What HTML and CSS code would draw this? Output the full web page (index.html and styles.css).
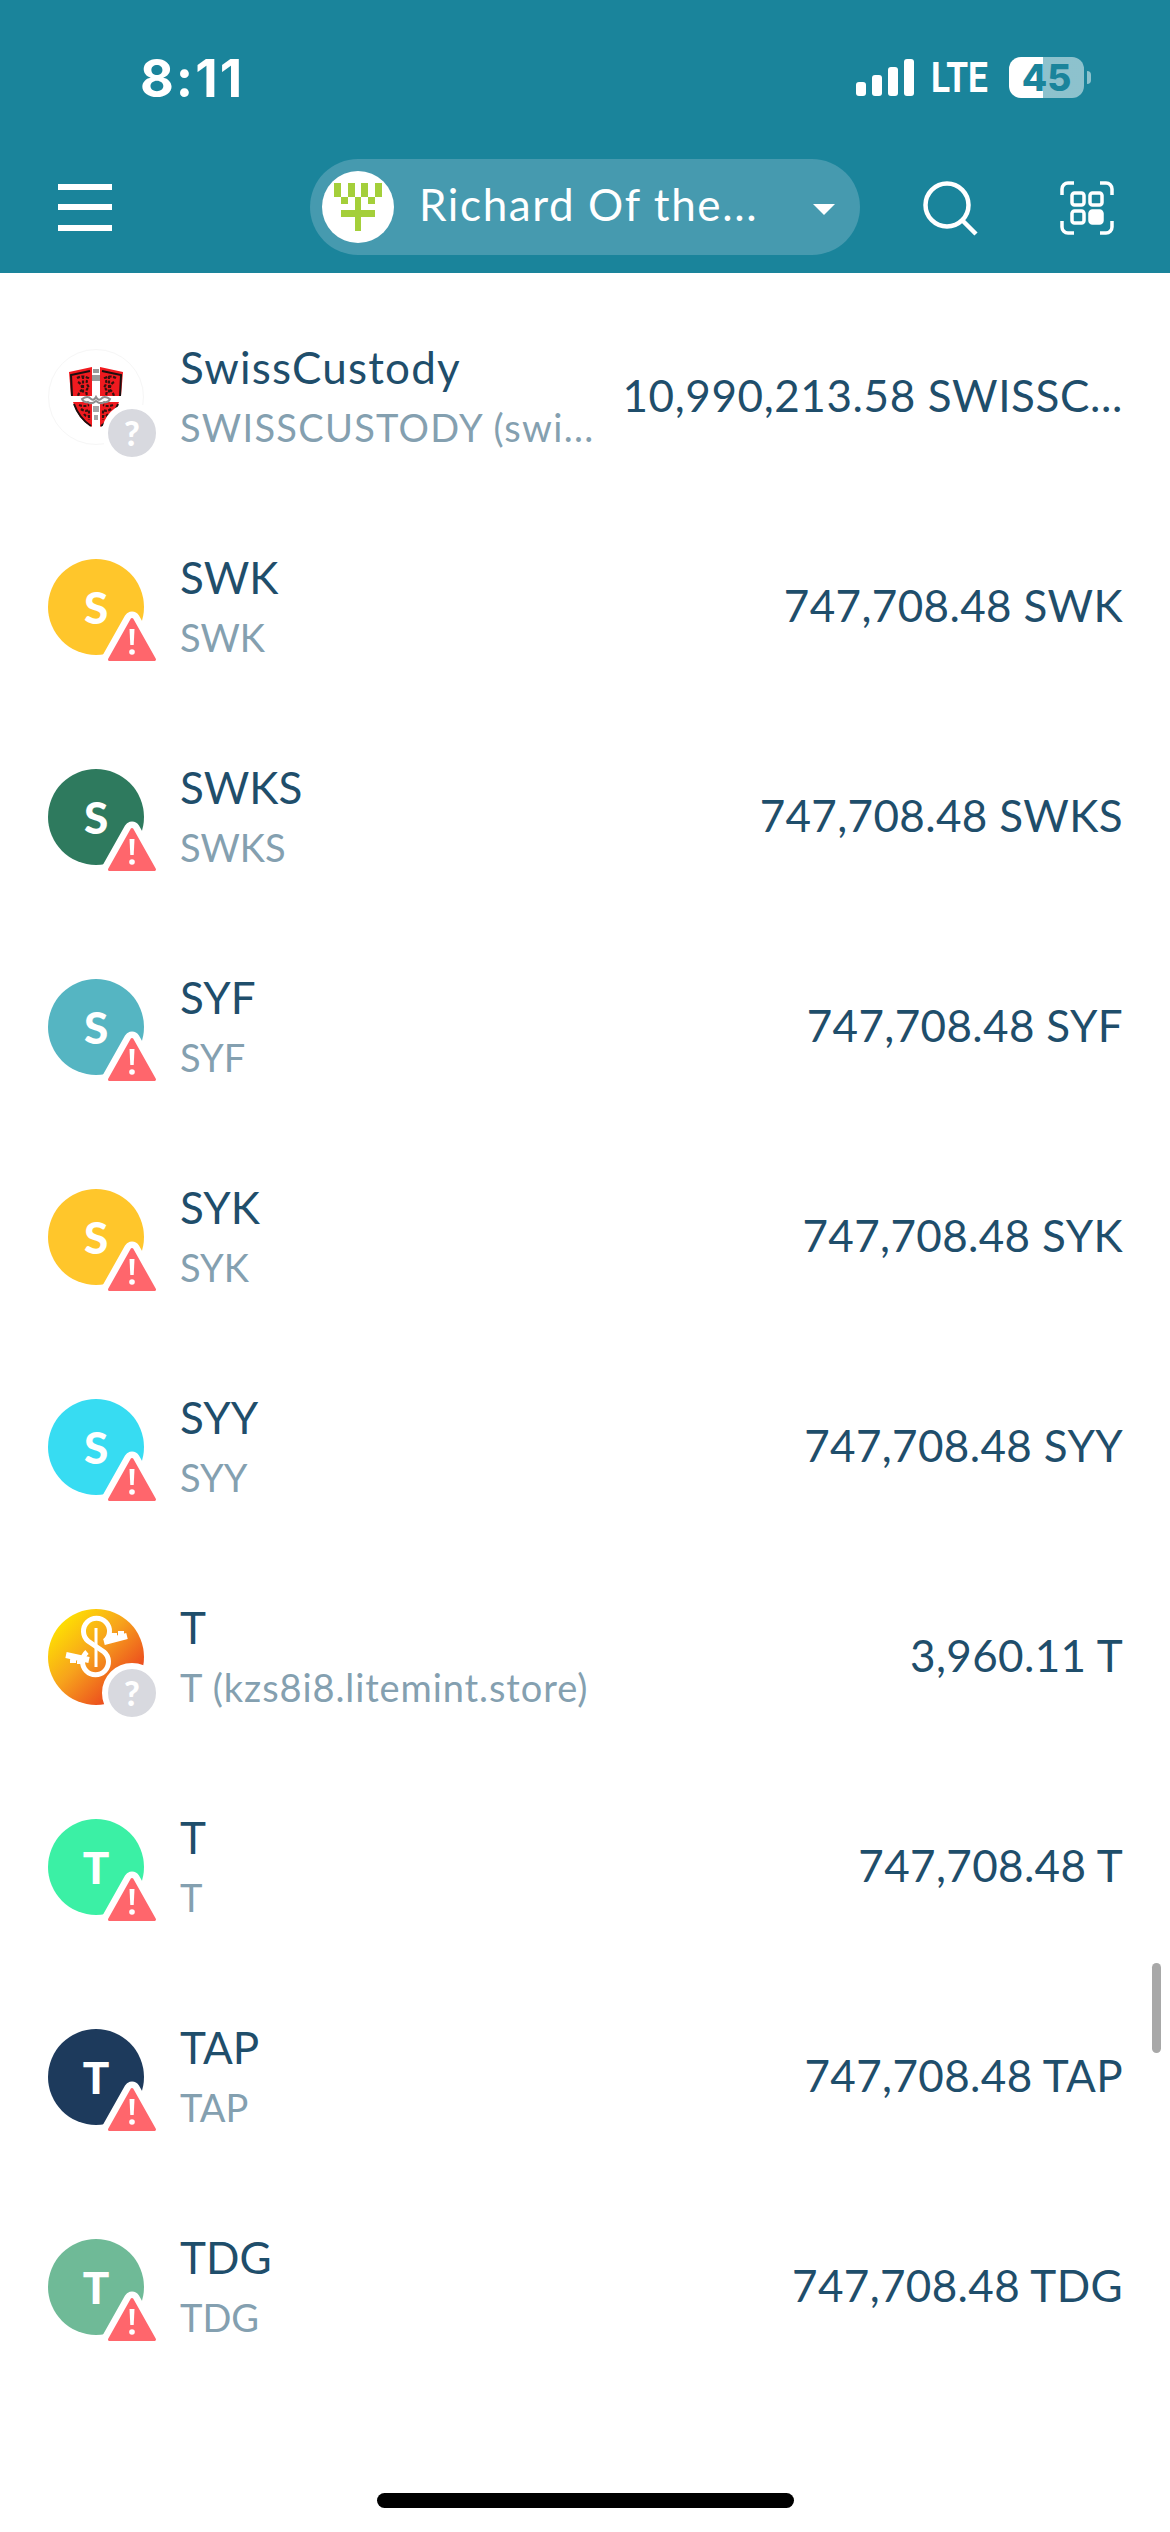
FILE: index.html
```html
<!DOCTYPE html>
<html lang="en">
<head>
  <meta charset="UTF-8">
  <title>Wallet assets</title>
  <link rel="stylesheet" href="styles.css">
</head>
<body>
  <svg class="defs" width="0" height="0">
    <symbol id="warn" viewBox="0 0 60 55">
      <path d="M30 8.500 L52.500 48.500 H7.500 Z" fill="#ff666c" stroke="#fff" stroke-width="16" stroke-linejoin="round"/>
      <path d="M30 8.500 L52.500 48.500 H7.500 Z" fill="#ff666c" stroke="#ff666c" stroke-width="3" stroke-linejoin="round"/>
      <path d="M27.500 18 h5 l-0.800 16 h-3.400 Z" fill="#fff"/>
      <circle cx="30" cy="41" r="2.800" fill="#fff"/>
    </symbol>
  </svg>

  <header class="top">
    <div class="status">
      <span class="time">8:11</span>
      <div class="status-right">
        <div class="signal"><i class="b1"></i><i class="b2"></i><i class="b3"></i><i class="b4"></i></div>
        <span class="lte">LTE</span>
        <div class="battery">45</div>
        <div class="nub"></div>
      </div>
    </div>
    <nav class="nav">
      <div class="burger"><i></i><i></i><i></i></div>
      <div class="pill">
        <div class="pill-logo">
          <svg width="48" height="48" viewBox="0 0 48 48" fill="#a4cf3a">
            <rect x="0" y="0" width="7" height="14"/><rect x="14" y="0" width="7" height="14"/><rect x="27" y="0" width="7" height="14"/><rect x="41" y="0" width="7" height="14"/>
            <rect x="7" y="14" width="7" height="7"/><rect x="34" y="14" width="7" height="7"/>
            <rect x="21" y="14" width="6" height="34"/>
            <rect x="7" y="27" width="34" height="7"/>
          </svg>
        </div>
        <span class="pill-name">Richard Of the...</span>
        <span class="caret"></span>
      </div>
      <svg class="search" width="56" height="56" viewBox="0 0 56 56" fill="none" stroke="#fff" stroke-width="4.500">
        <circle cx="24" cy="24" r="21.500"/>
        <path d="M39 39 L53 53"/>
      </svg>
      <svg class="scan" width="54" height="54" viewBox="0 0 54 54" fill="none" stroke="#fff" stroke-width="3.500">
        <path d="M2 14 V8 a6 6 0 0 1 6 -6 h6"/>
        <path d="M40 2 h6 a6 6 0 0 1 6 6 v6"/>
        <path d="M2 40 v6 a6 6 0 0 0 6 6 h6"/>
        <path d="M52 40 v6 a6 6 0 0 1 -6 6 h-6"/>
        <rect x="12" y="12" width="12" height="12" rx="2.500"/>
        <rect x="30" y="12" width="12" height="12" rx="2.500"/>
        <rect x="12" y="30" width="12" height="12" rx="2.500"/>
        <rect x="30" y="30" width="12" height="12" rx="2.500" fill="#fff"/>
      </svg>
    </nav>
  </header>

  <main class="list">
    <div class="row">
      <div class="icon">
        <div class="coin coin-logo">
          <svg width="56" height="62" viewBox="0 0 56 62">
            <!-- upper and lower panels of the shield -->
            <path d="M1 6 L24 1 V30 H3 Z" fill="#f01a1f"/>
            <path d="M55 6 L32 1 V30 H53 Z" fill="#f01a1f"/>
            <path d="M5 36 H24 V61 Q10 54 5 36 Z" fill="#f01a1f"/>
            <path d="M51 36 H32 V61 Q46 54 51 36 Z" fill="#f01a1f"/>
            <path d="M4 30 L3 9 L22 5 M52 30 L53 9 L34 5 M6 38 Q11 52 23 60 M50 38 Q45 52 33 60" fill="none" stroke="#1a1010" stroke-width="2"/>
            <!-- lions, roughly -->
            <path d="M9 12 q6 -3 11 0 q-3 5 1 9 q-4 3 -2 8 M10 16 q5 3 4 8 q-3 2 -4 6 M15 10 v18 M48 12 q-6 -3 -11 0 q3 5 -1 9 q4 3 2 8 M46 16 q-5 3 -4 8 q3 2 4 6 M41 10 v18" fill="none" stroke="#35120f" stroke-width="2.200" stroke-dasharray="3 1.500"/>
            <path d="M11 39 q5 2 10 0 M13 43 q4 3 8 1 v10 M16 48 q2 3 4 2 M45 39 q-5 2 -10 0 M43 43 q-4 3 -8 1 v10 M40 48 q-2 3 -4 2" fill="none" stroke="#35120f" stroke-width="2.200" stroke-dasharray="3 1.500"/>
            <!-- grey ornament on the white cross -->
            <path d="M25 3 h6 v4 h-6 Z M24 9 h8 v6 h-8 Z" fill="#9a9a9a"/>
            <path d="M14 33 q6 -4 9 0 q3 2 5 -2 q2 4 5 2 q3 -4 9 0 q-2 4 -6 3 q-3 3 -8 -1 q-5 4 -8 1 q-4 1 -6 -3 Z" fill="none" stroke="#8e8e8e" stroke-width="2"/>
            <path d="M25 40 h6 v6 h-6 Z M26 49 h4 v5 h-4 Z" fill="#a5a5a5"/>
          </svg>
        </div>
        <span class="badge-q">?</span>
      </div>
      <div class="names">
        <div class="name name-mixed">SwissCustody</div>
        <div class="sub sub-long">SWISSCUSTODY (swi...</div>
      </div>
      <div class="amount amount-long">10,990,213.58 SWISSC...</div>
    </div>

    <div class="row">
      <div class="icon">
        <div class="coin c-yellow">S</div>
        <svg class="badge-warn" width="60" height="55"><use href="#warn"/></svg>
      </div>
      <div class="names"><div class="name">SWK</div><div class="sub">SWK</div></div>
      <div class="amount">747,708.48 SWK</div>
    </div>

    <div class="row">
      <div class="icon">
        <div class="coin c-green">S</div>
        <svg class="badge-warn" width="60" height="55"><use href="#warn"/></svg>
      </div>
      <div class="names"><div class="name">SWKS</div><div class="sub">SWKS</div></div>
      <div class="amount">747,708.48 SWKS</div>
    </div>

    <div class="row">
      <div class="icon">
        <div class="coin c-teal">S</div>
        <svg class="badge-warn" width="60" height="55"><use href="#warn"/></svg>
      </div>
      <div class="names"><div class="name">SYF</div><div class="sub">SYF</div></div>
      <div class="amount">747,708.48 SYF</div>
    </div>

    <div class="row">
      <div class="icon">
        <div class="coin c-yellow">S</div>
        <svg class="badge-warn" width="60" height="55"><use href="#warn"/></svg>
      </div>
      <div class="names"><div class="name">SYK</div><div class="sub">SYK</div></div>
      <div class="amount">747,708.48 SYK</div>
    </div>

    <div class="row">
      <div class="icon">
        <div class="coin c-cyan">S</div>
        <svg class="badge-warn" width="60" height="55"><use href="#warn"/></svg>
      </div>
      <div class="names"><div class="name">SYY</div><div class="sub">SYY</div></div>
      <div class="amount">747,708.48 SYY</div>
    </div>

    <div class="row">
      <div class="icon">
        <div class="coin c-yfi">
          <svg width="96" height="96" viewBox="0 0 96 96" fill="none" stroke="#fff" stroke-width="5">
            <path d="M48 19 V58" stroke-width="3"/>
            <path d="M57 32 A13 13 0 1 0 40 32 L56 43 A13 13 0 1 1 39 43"/>
            <path d="M56 33 L79 27 M66 30 V24 M73 28 V22" stroke-width="6"/>
            <path d="M18 46 L41 51 M25 48 V54 M32 49 V55" stroke-width="6"/>
          </svg>
        </div>
        <span class="badge-q">?</span>
      </div>
      <div class="names"><div class="name">T</div><div class="sub sub-mixed">T (kzs8i8.litemint.store)</div></div>
      <div class="amount">3,960.11 T</div>
    </div>

    <div class="row">
      <div class="icon">
        <div class="coin c-mint">T</div>
        <svg class="badge-warn" width="60" height="55"><use href="#warn"/></svg>
      </div>
      <div class="names"><div class="name">T</div><div class="sub">T</div></div>
      <div class="amount">747,708.48 T</div>
    </div>

    <div class="row">
      <div class="icon">
        <div class="coin c-navy">T</div>
        <svg class="badge-warn" width="60" height="55"><use href="#warn"/></svg>
      </div>
      <div class="names"><div class="name">TAP</div><div class="sub">TAP</div></div>
      <div class="amount">747,708.48 TAP</div>
    </div>

    <div class="row">
      <div class="icon">
        <div class="coin c-sage">T</div>
        <svg class="badge-warn" width="60" height="55"><use href="#warn"/></svg>
      </div>
      <div class="names"><div class="name">TDG</div><div class="sub">TDG</div></div>
      <div class="amount">747,708.48 TDG</div>
    </div>
  </main>

  <div class="scrollbar"></div>
  <div class="home-bar"></div>
</body>
</html>
```

FILE: styles.css
```css
html, body {
  margin: 0;
  height: 2532px;
  overflow: hidden;
  background: #fff;
  font-family: Lato, "Open Sans", sans-serif;
}
.defs {
  position: absolute;
}
.top {
  background: #1a849b;
  height: 273px;
  color: #fff;
}
.status {
  height: 159px;
  box-sizing: border-box;
  padding: 57px 79px 0 140px;
  display: flex;
  justify-content: space-between;
  align-items: flex-start;
}
.time {
  font-family: Inter, sans-serif;
  font-weight: 700;
  font-size: 52px;
  line-height: 44px;
  letter-spacing: 2px;
}
.status-right {
  display: flex;
  align-items: center;
  height: 41px;
}
.signal {
  display: flex;
  align-items: flex-end;
  gap: 6px;
  height: 37px;
}
.signal i {
  display: block;
  width: 10px;
  background: #fff;
  border-radius: 3px;
}
.b1 { height: 14px; }
.b2 { height: 21px; }
.b3 { height: 29px; }
.b4 { height: 37px; }
.lte {
  margin-left: 17px;
  width: 60px;
  font-family: Roboto, sans-serif;
  font-weight: 700;
  font-size: 42px;
  line-height: 41px;
  white-space: nowrap;
  transform: scaleX(0.84);
  transform-origin: left center;
}
.battery {
  margin-left: 18px;
  width: 75px;
  height: 41px;
  border-radius: 12px;
  background: linear-gradient(90deg, #fff 34px, rgba(255, 255, 255, 0.5) 34px);
  color: #1a849b;
  font-family: Inter, sans-serif;
  font-weight: 800;
  font-size: 37px;
  line-height: 41px;
  text-align: center;
}
.nub {
  margin-left: 3px;
  width: 4px;
  height: 13px;
  border-radius: 0 6px 6px 0;
  background: rgba(255, 255, 255, 0.5);
}

.nav {
  display: flex;
  align-items: center;
  height: 96px;
  padding-left: 58px;
}
.burger {
  width: 54px;
  height: 47px;
  display: flex;
  flex-direction: column;
  justify-content: space-between;
}
.burger i {
  display: block;
  height: 6px;
  background: #fff;
}
.pill {
  margin-left: 198px;
  width: 550px;
  height: 96px;
  border-radius: 48px;
  background: #469aaf;
  display: flex;
  align-items: center;
  padding-left: 12px;
  box-sizing: border-box;
}
.pill-logo {
  width: 72px;
  height: 72px;
  border-radius: 50%;
  background: #fff;
  display: flex;
  align-items: center;
  justify-content: center;
}
.pill-name {
  margin-left: 25px;
  margin-bottom: 6px;
  width: 394px;
  font-size: 44px;
  letter-spacing: 1.6px;
  white-space: nowrap;
}
.caret {
  width: 0;
  height: 0;
  border-left: 11px solid transparent;
  border-right: 11px solid transparent;
  border-top: 11px solid #fff;
  margin-top: 4px;
}
.search {
  margin-left: 63px;
  margin-top: 4px;
}
.scan {
  margin-left: 81px;
  margin-top: 2px;
}

.list {
  padding-top: 19px;
}
.row {
  height: 210px;
  display: flex;
  align-items: center;
  padding: 0 47px 0 48px;
}
.icon {
  position: relative;
  width: 96px;
  height: 96px;
  flex: none;
}
.coin {
  width: 96px;
  height: 96px;
  border-radius: 50%;
  color: #fff;
  font-weight: 900;
  font-size: 44px;
  line-height: 96px;
  text-align: center;
  overflow: hidden;
}
.coin svg {
  display: block;
}
.coin-logo {
  box-sizing: border-box;
  border: 1px solid #f6f6f6;
  display: flex;
  align-items: center;
  justify-content: center;
}
.c-yellow { background: #ffc62b; }
.c-green { background: #2e7a5e; }
.c-teal { background: #55b5c2; }
.c-cyan { background: #37dcf2; }
.c-mint { background: #3bf0a5; }
.c-navy { background: #1d3a5c; }
.c-sage { background: #6fba97; }
.c-yfi { background: linear-gradient(135deg, #ffe600 10%, #f7a31c 45%, #e8301f 90%); }
.badge-q {
  position: absolute;
  right: -18px;
  bottom: -18px;
  width: 48px;
  height: 48px;
  border: 6px solid #fff;
  border-radius: 50%;
  background: #d8d9df;
  color: #fff;
  font-weight: 900;
  font-size: 34px;
  line-height: 48px;
  text-align: center;
}
.badge-warn {
  position: absolute;
  right: -18px;
  bottom: -11px;
}
.names {
  margin-left: 36px;
  flex: 1;
  min-width: 0;
}
.name {
  color: #1f4e6b;
  font-size: 44px;
  line-height: 60px;
  white-space: nowrap;
}
.name-mixed {
  letter-spacing: 1.2px;
}
.sub {
  color: #84a0b0;
  font-size: 38px;
  line-height: 60px;
  white-space: nowrap;
}
.sub-mixed {
  letter-spacing: 0.9px;
}
.sub-long {
  letter-spacing: 1.3px;
}
.amount {
  margin-bottom: 4px;
  color: #1f4e6b;
  font-size: 44px;
  letter-spacing: 0.35px;
  white-space: nowrap;
}
.amount-long {
  letter-spacing: 0.6px;
}
.scrollbar {
  position: absolute;
  left: 1152px;
  top: 1963px;
  width: 9px;
  height: 90px;
  border-radius: 5px;
  background: #a8a8a8;
}
.home-bar {
  position: absolute;
  left: 377px;
  top: 2493px;
  width: 417px;
  height: 15px;
  border-radius: 8px;
  background: #000;
}
```
